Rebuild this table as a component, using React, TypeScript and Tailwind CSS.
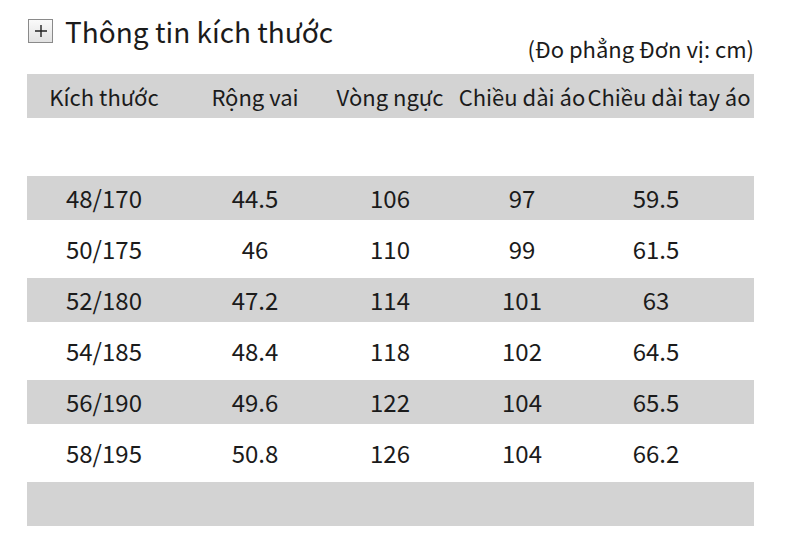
import React from "react";

const rows = [
  ["48/170", "44.5", "106", "97", "59.5"],
  ["50/175", "46", "110", "99", "61.5"],
  ["52/180", "47.2", "114", "101", "63"],
  ["54/185", "48.4", "118", "102", "64.5"],
  ["56/190", "49.6", "122", "104", "65.5"],
  ["58/195", "50.8", "126", "104", "66.2"],
];

const headers = ["Kích thước", "Rộng vai", "Vòng ngực", "Chiều dài áo", "Chiều dài tay áo"];

export default function App() {
  return (
    <div
      className="w-[790px] h-[553px] bg-white text-[#1b1b1b] overflow-hidden"
      style={{ fontFamily: '"Noto Sans CJK SC", "Noto Sans", sans-serif' }}
    >
      {/* title + unit note */}
      <div className="h-[74px] pl-[28px] pr-[36px] flex justify-between">
        <div className="self-start pt-[17px] flex items-center gap-[12px]">
          <div className="w-[25px] h-[24px] border border-[#8a8a8a] bg-gradient-to-b from-[#fafafa] to-[#e2e2e2] flex items-center justify-center">
            <svg width="16" height="16" viewBox="0 0 16 16">
              <path d="M8 2v12M2 8h12" stroke="#222" strokeWidth="1.4" />
            </svg>
          </div>
          <span className="text-[28px] leading-none">Thông tin kích thước</span>
        </div>
        <span className="self-end pb-[15px] text-[22px] leading-none">(Đo phẳng Đơn vị: cm)</span>
      </div>

      <div className="ml-[27px] w-[727px]">
        {/* header */}
        <div className="h-[44px] bg-[#d3d3d3] text-[22px] grid grid-cols-[154px_148px_122px_142px_152px] items-center">
          {headers.map((h) => (
            <div key={h} className="flex justify-center whitespace-nowrap">
              {h}
            </div>
          ))}
        </div>
        <div className="h-[58px]" />
        {rows.map((r, i) => (
          <div
            key={i}
            className={`grid grid-cols-[154px_148px_122px_142px_126px] items-center text-[24px] ${
              i % 2 === 0 ? "h-[44px] bg-[#d3d3d3]" : "h-[58px]"
            }`}
          >
            {r.map((c, j) => (
              <span key={j} className="text-center">
                {c}
              </span>
            ))}
          </div>
        ))}
        <div className="h-[44px] bg-[#d3d3d3]" />
      </div>
    </div>
  );
}
